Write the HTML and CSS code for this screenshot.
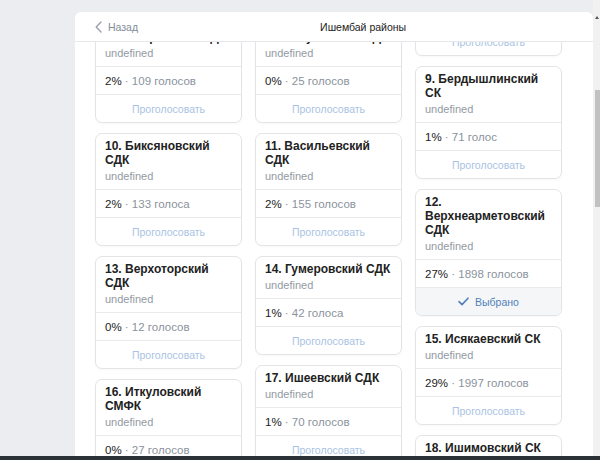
FILE: index.html
```html
<!DOCTYPE html>
<html lang="ru">
<head>
<meta charset="utf-8">
<title>Ишембай районы</title>
<link rel="stylesheet" href="styles.css">
</head>
<body>
<div class="panel">
  <div class="header">
    <div class="back">
      <svg class="chev" width="7" height="12" viewBox="0 0 7 12"><path d="M6 1 L1.2 6 L6 11" fill="none" stroke="#99a2ad" stroke-width="1.4" stroke-linecap="round" stroke-linejoin="round"/></svg>
      <span>Назад</span>
    </div>
    <div class="title">Ишембай районы</div>
  </div>
  <div class="viewport">
    <div class="list">
      <div class="col">
        <div class="card"><div class="card-head"><div class="card-title">1. Азнаевский СК</div><div class="card-sub">undefined</div></div><div class="card-stats"><span class="pct">1%</span>&nbsp;· 48 голосов</div><div class="card-vote">Проголосовать</div></div>
        <div class="card"><div class="card-head"><div class="card-title">4. Аптраковский СК</div><div class="card-sub">undefined</div></div><div class="card-stats"><span class="pct">0%</span>&nbsp;· 19 голосов</div><div class="card-vote">Проголосовать</div></div>
        <div class="card"><div class="card-head"><div class="card-title">7. Ахмеровский СДК</div><div class="card-sub">undefined</div></div><div class="card-stats"><span class="pct">2%</span>&nbsp;· 109 голосов</div><div class="card-vote">Проголосовать</div></div>
        <div class="card" id="c10"><div class="card-head"><div class="card-title">10. Биксяновский СДК</div><div class="card-sub">undefined</div></div><div class="card-stats"><span class="pct">2%</span>&nbsp;· 133 голоса</div><div class="card-vote">Проголосовать</div></div>
        <div class="card"><div class="card-head"><div class="card-title">13. Верхоторский СДК</div><div class="card-sub">undefined</div></div><div class="card-stats"><span class="pct">0%</span>&nbsp;· 12 голосов</div><div class="card-vote">Проголосовать</div></div>
        <div class="card"><div class="card-head"><div class="card-title">16. Иткуловский СМФК</div><div class="card-sub">undefined</div></div><div class="card-stats"><span class="pct">0%</span>&nbsp;· 27 голосов</div><div class="card-vote">Проголосовать</div></div>
      </div>
      <div class="col">
        <div class="card"><div class="card-head"><div class="card-title">2. Азнаевский СДК</div><div class="card-sub">undefined</div></div><div class="card-stats"><span class="pct">1%</span>&nbsp;· 51 голос</div><div class="card-vote">Проголосовать</div></div>
        <div class="card"><div class="card-head"><div class="card-title">5. Арметовский СК</div><div class="card-sub">undefined</div></div><div class="card-stats"><span class="pct">0%</span>&nbsp;· 8 голосов</div><div class="card-vote">Проголосовать</div></div>
        <div class="card"><div class="card-head"><div class="card-title">8. Байгузинский СДК</div><div class="card-sub">undefined</div></div><div class="card-stats"><span class="pct">0%</span>&nbsp;· 25 голосов</div><div class="card-vote">Проголосовать</div></div>
        <div class="card"><div class="card-head"><div class="card-title">11. Васильевский СДК</div><div class="card-sub">undefined</div></div><div class="card-stats"><span class="pct">2%</span>&nbsp;· 155 голосов</div><div class="card-vote">Проголосовать</div></div>
        <div class="card"><div class="card-head"><div class="card-title">14. Гумеровский СДК</div><div class="card-sub">undefined</div></div><div class="card-stats"><span class="pct">1%</span>&nbsp;· 42 голоса</div><div class="card-vote">Проголосовать</div></div>
        <div class="card"><div class="card-head"><div class="card-title">17. Ишеевский СДК</div><div class="card-sub">undefined</div></div><div class="card-stats"><span class="pct">1%</span>&nbsp;· 70 голосов</div><div class="card-vote">Проголосовать</div></div>
      </div>
      <div class="col">
        <div class="card"><div class="card-head"><div class="card-title">3. Арметовский сельский клуб</div><div class="card-sub">undefined</div></div><div class="card-stats"><span class="pct">1%</span>&nbsp;· 40 голосов</div><div class="card-vote">Проголосовать</div></div>
        <div class="card"><div class="card-head"><div class="card-title">6. Верхнеиткуловский СДК</div><div class="card-sub">undefined</div></div><div class="card-stats"><span class="pct">1%</span>&nbsp;· 77 голосов</div><div class="card-vote">Проголосовать</div></div>
        <div class="card"><div class="card-head"><div class="card-title">9. Бердышлинский СК</div><div class="card-sub">undefined</div></div><div class="card-stats"><span class="pct">1%</span>&nbsp;· 71 голос</div><div class="card-vote">Проголосовать</div></div>
        <div class="card"><div class="card-head"><div class="card-title">12. Верхнеарметовский СДК</div><div class="card-sub">undefined</div></div><div class="card-stats"><span class="pct">27%</span>&nbsp;· 1898 голосов</div><div class="card-vote is-chosen"><svg width="11" height="9" viewBox="0 0 11 9"><path d="M1 4.6 L4 7.6 L10 1.2" fill="none" stroke="#5181b8" stroke-width="1.6" stroke-linecap="round" stroke-linejoin="round"/></svg><span>Выбрано</span></div></div>
        <div class="card"><div class="card-head"><div class="card-title">15. Исякаевский СК</div><div class="card-sub">undefined</div></div><div class="card-stats"><span class="pct">29%</span>&nbsp;· 1997 голосов</div><div class="card-vote">Проголосовать</div></div>
        <div class="card"><div class="card-head"><div class="card-title">18. Ишимовский СК</div><div class="card-sub">undefined</div></div><div class="card-stats"><span class="pct">1%</span>&nbsp;· 58 голосов</div><div class="card-vote">Проголосовать</div></div>
      </div>
    </div>
  </div>
</div>
<div class="scrollbar"><div class="scroll-arrow"></div><div class="scroll-thumb"></div></div>
<div class="taskbar"></div>
<script src="script.js"></script>
</body>
</html>
```
FILE: styles.css
```css
html, body {
  margin: 0;
  height: 100%;
  overflow: hidden;
}
body {
  background: #ebedf0;
  font-family: "Liberation Sans", Arial, sans-serif;
  display: flex;
  padding: 12px 7px 0 75px;
  box-sizing: border-box;
}
.panel {
  width: 518px;
  height: 100%;
  background: #fff;
  border-radius: 6px 6px 0 0;
  display: flex;
  flex-direction: column;
}
.header {
  flex: none;
  height: 29px;
  border-bottom: 1px solid #e7e8ec;
  display: flex;
  align-items: center;
  padding-left: 20px;
}
.back {
  display: flex;
  align-items: center;
  gap: 6px;
  color: #818c99;
  font-size: 10.5px;
}
.chev { display: block; }
.title {
  margin-left: 182px;
  font-size: 10.5px;
  color: #222;
}
.viewport {
  flex: 1;
  overflow: hidden;
}
.list {
  display: grid;
  grid-template-columns: repeat(3, 147px);
  column-gap: 13px;
  align-items: start;
  padding: 10px 0 10px 20px;
}
.col {
  display: flex;
  flex-direction: column;
  gap: 10px;
}
.card {
  background: #fff;
  border: 1px solid #e3e4e8;
  border-radius: 7px;
  overflow: hidden;
  box-shadow: 0 1px 2px rgba(0, 0, 0, 0.03);
}
.card-head {
  padding: 5px 8px 6px 9px;
}
.card-title {
  font-size: 12px;
  font-weight: 700;
  line-height: 14px;
  color: #222;
}
.card-sub {
  margin-top: 2px;
  font-size: 11px;
  line-height: 14px;
  color: #939aa2;
}
.card-stats {
  border-top: 1px solid #e9eaee;
  height: 27px;
  display: flex;
  align-items: center;
  padding: 0 9px;
  font-size: 11.5px;
  color: #8a939d;
}
.pct { color: #222; }
.card-vote {
  border-top: 1px solid #e9eaee;
  height: 27px;
  display: flex;
  align-items: center;
  justify-content: center;
  font-size: 10.5px;
  color: #a9c3e3;
}
.card-vote.is-chosen {
  background: #f5f6f8;
  color: #5181b8;
  gap: 6px;
}
.card-vote.is-chosen svg { display: block; }
.scrollbar {
  position: fixed;
  top: 0;
  right: 0;
  width: 7px;
  height: 100%;
  background: #f1f1f1;
}
.scroll-arrow {
  position: absolute;
  top: 16px;
  left: 2px;
  width: 0;
  height: 0;
  border-left: 2px solid transparent;
  border-right: 2px solid transparent;
  border-bottom: 3px solid #555;
}
.scroll-thumb {
  position: absolute;
  top: 90px;
  left: 2px;
  width: 5px;
  height: 117px;
  background: #c1c1c1;
}
.taskbar {
  position: fixed;
  left: 0;
  right: 0;
  bottom: 0;
  height: 4px;
  background: #2b3238;
}
```
FILE: script.js
```js
(function () {
  var v = document.querySelector('.viewport');
  var target = document.getElementById('c10');
  if (v && target) {
    v.scrollTop = Math.round(target.getBoundingClientRect().top - 133);
  }
})();
```
